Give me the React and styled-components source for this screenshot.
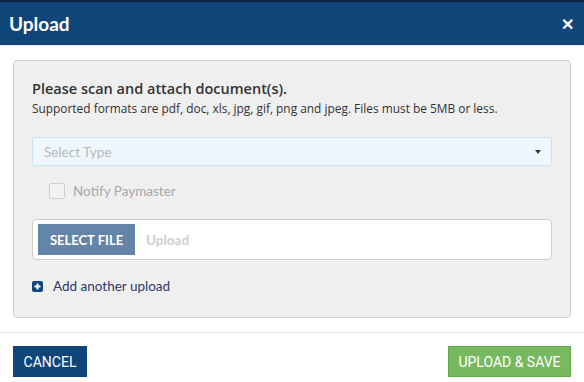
import React from 'react'
import styled, { createGlobalStyle } from 'styled-components'

const Global = createGlobalStyle`
  html, body { margin: 0; padding: 0; background: #fff; }
  body { width: 584px; height: 382px; overflow: hidden; font-family: "Open Sans", sans-serif; }
`

const TopStrip = styled.div`
  height: 2px;
  background: #0d2340;
`

const Header = styled.div`
  height: 43px;
  background: #10457a;
  display: flex;
  align-items: center;
  justify-content: space-between;
  padding: 0 10px 0 9px;
  border-bottom: 1px solid #e6e6e6;
`

const Title = styled.h1`
  margin: 0;
  font-family: Lato, sans-serif;
  font-weight: 700;
  font-size: 19px;
  color: #fff;
`

const Close = styled.span`
  color: #fff;
  font-family: "Open Sans", sans-serif;
  font-weight: 700;
  font-size: 16px;
  line-height: 1;
`

const Body = styled.div`
  padding: 14px 13px;
  border-bottom: 1px solid #e5e5e5;
`

const Panel = styled.div`
  background: #efefef;
  border: 1px solid #cfcfcf;
  border-radius: 4px;
  padding: 18px 18px 24px 18px;
  height: 258px;
  box-sizing: border-box;
`

const Heading = styled.div`
  font-weight: 600;
  font-size: 14.5px;
  color: #333;
  line-height: 20px;
`

const Sub = styled.div`
  font-size: 11.9px;
  color: #333;
  line-height: 16px;
  margin-top: 1px;
`

const Select = styled.div`
  margin-top: 21px;
  height: 29px;
  box-sizing: border-box;
  background: #edf7fd;
  border: 1px solid #c9e2f4;
  border-radius: 2px;
  display: flex;
  align-items: center;
  justify-content: space-between;
  padding: 0 10px 0 11px;
  font-family: Lato, sans-serif;
  font-size: 13.5px;
  color: #b8b8b8;
`

const Caret = styled.span`
  width: 0;
  height: 0;
  border-left: 3.5px solid transparent;
  border-right: 3.5px solid transparent;
  border-top: 4px solid #333;
`

const CheckRow = styled.label`
  display: flex;
  align-items: center;
  gap: 8px;
  margin: 17px 0 0 17px;
  font-family: Lato, sans-serif;
  font-size: 13.5px;
  color: #a8a8a8;
`

const Box = styled.span`
  width: 14px;
  height: 14px;
  border: 1px solid #cfcfcf;
  border-radius: 2px;
  background: #f3f3f3;
`

const FileField = styled.div`
  margin-top: 20px;
  height: 41px;
  box-sizing: border-box;
  background: #fff;
  border: 1px solid #cdcdcd;
  border-radius: 4px;
  display: flex;
  align-items: center;
  padding: 0 5px;
  gap: 11px;
`

const FileButton = styled.span`
  background: #6585a8;
  color: #fff;
  height: 31px;
  width: 97px;
  display: flex;
  align-items: center;
  justify-content: center;
  font-family: Lato, sans-serif;
  font-weight: 700;
  font-size: 13px;
`

const FileHint = styled.span`
  font-family: Lato, sans-serif;
  font-weight: 700;
  font-size: 13.5px;
  color: #cfcfcf;
`

const AddRow = styled.div`
  margin-top: 18px;
  display: flex;
  align-items: center;
  gap: 10px;
  font-family: Lato, sans-serif;
  font-size: 13.5px;
  color: #2e3a6a;
`

const Footer = styled.div`
  display: flex;
  justify-content: space-between;
  padding: 13px 13px 0 13px;
`

const Button = styled.button`
  height: 31px;
  box-sizing: border-box;
  padding: 0;
  width: ${({ green }) => (green ? '123px' : '74px')};
  border: 1px solid ${({ green }) => (green ? '#5fab4a' : '#10457a')};
  background: ${({ green }) => (green ? '#77b860' : '#10457a')};
  color: #fff;
  font-family: "Liberation Sans Narrow", Roboto, sans-serif;
  font-size: 14px;
  border-radius: 0;
`

const PlusIcon = () => (
  <svg width="11" height="11" viewBox="0 0 11 11">
    <rect width="11" height="11" rx="2" fill="#10457a" />
    <rect x="2.5" y="4.5" width="6" height="2" fill="#fff" />
    <rect x="4.5" y="2.5" width="2" height="6" fill="#fff" />
  </svg>
)

export default function App() {
  return (
    <>
      <Global />
      <TopStrip />
      <Header>
        <Title>Upload</Title>
        <Close>✕</Close>
      </Header>
      <Body>
        <Panel>
          <Heading>Please scan and attach document(s).</Heading>
          <Sub>Supported formats are pdf, doc, xls, jpg, gif, png and jpeg. Files must be 5MB or less.</Sub>
          <Select>
            <span>Select Type</span>
            <Caret />
          </Select>
          <CheckRow>
            <Box />
            Notify Paymaster
          </CheckRow>
          <FileField>
            <FileButton>SELECT FILE</FileButton>
            <FileHint>Upload</FileHint>
          </FileField>
          <AddRow>
            <PlusIcon />
            Add another upload
          </AddRow>
        </Panel>
      </Body>
      <Footer>
        <Button>CANCEL</Button>
        <Button green>UPLOAD &amp; SAVE</Button>
      </Footer>
    </>
  )
}
